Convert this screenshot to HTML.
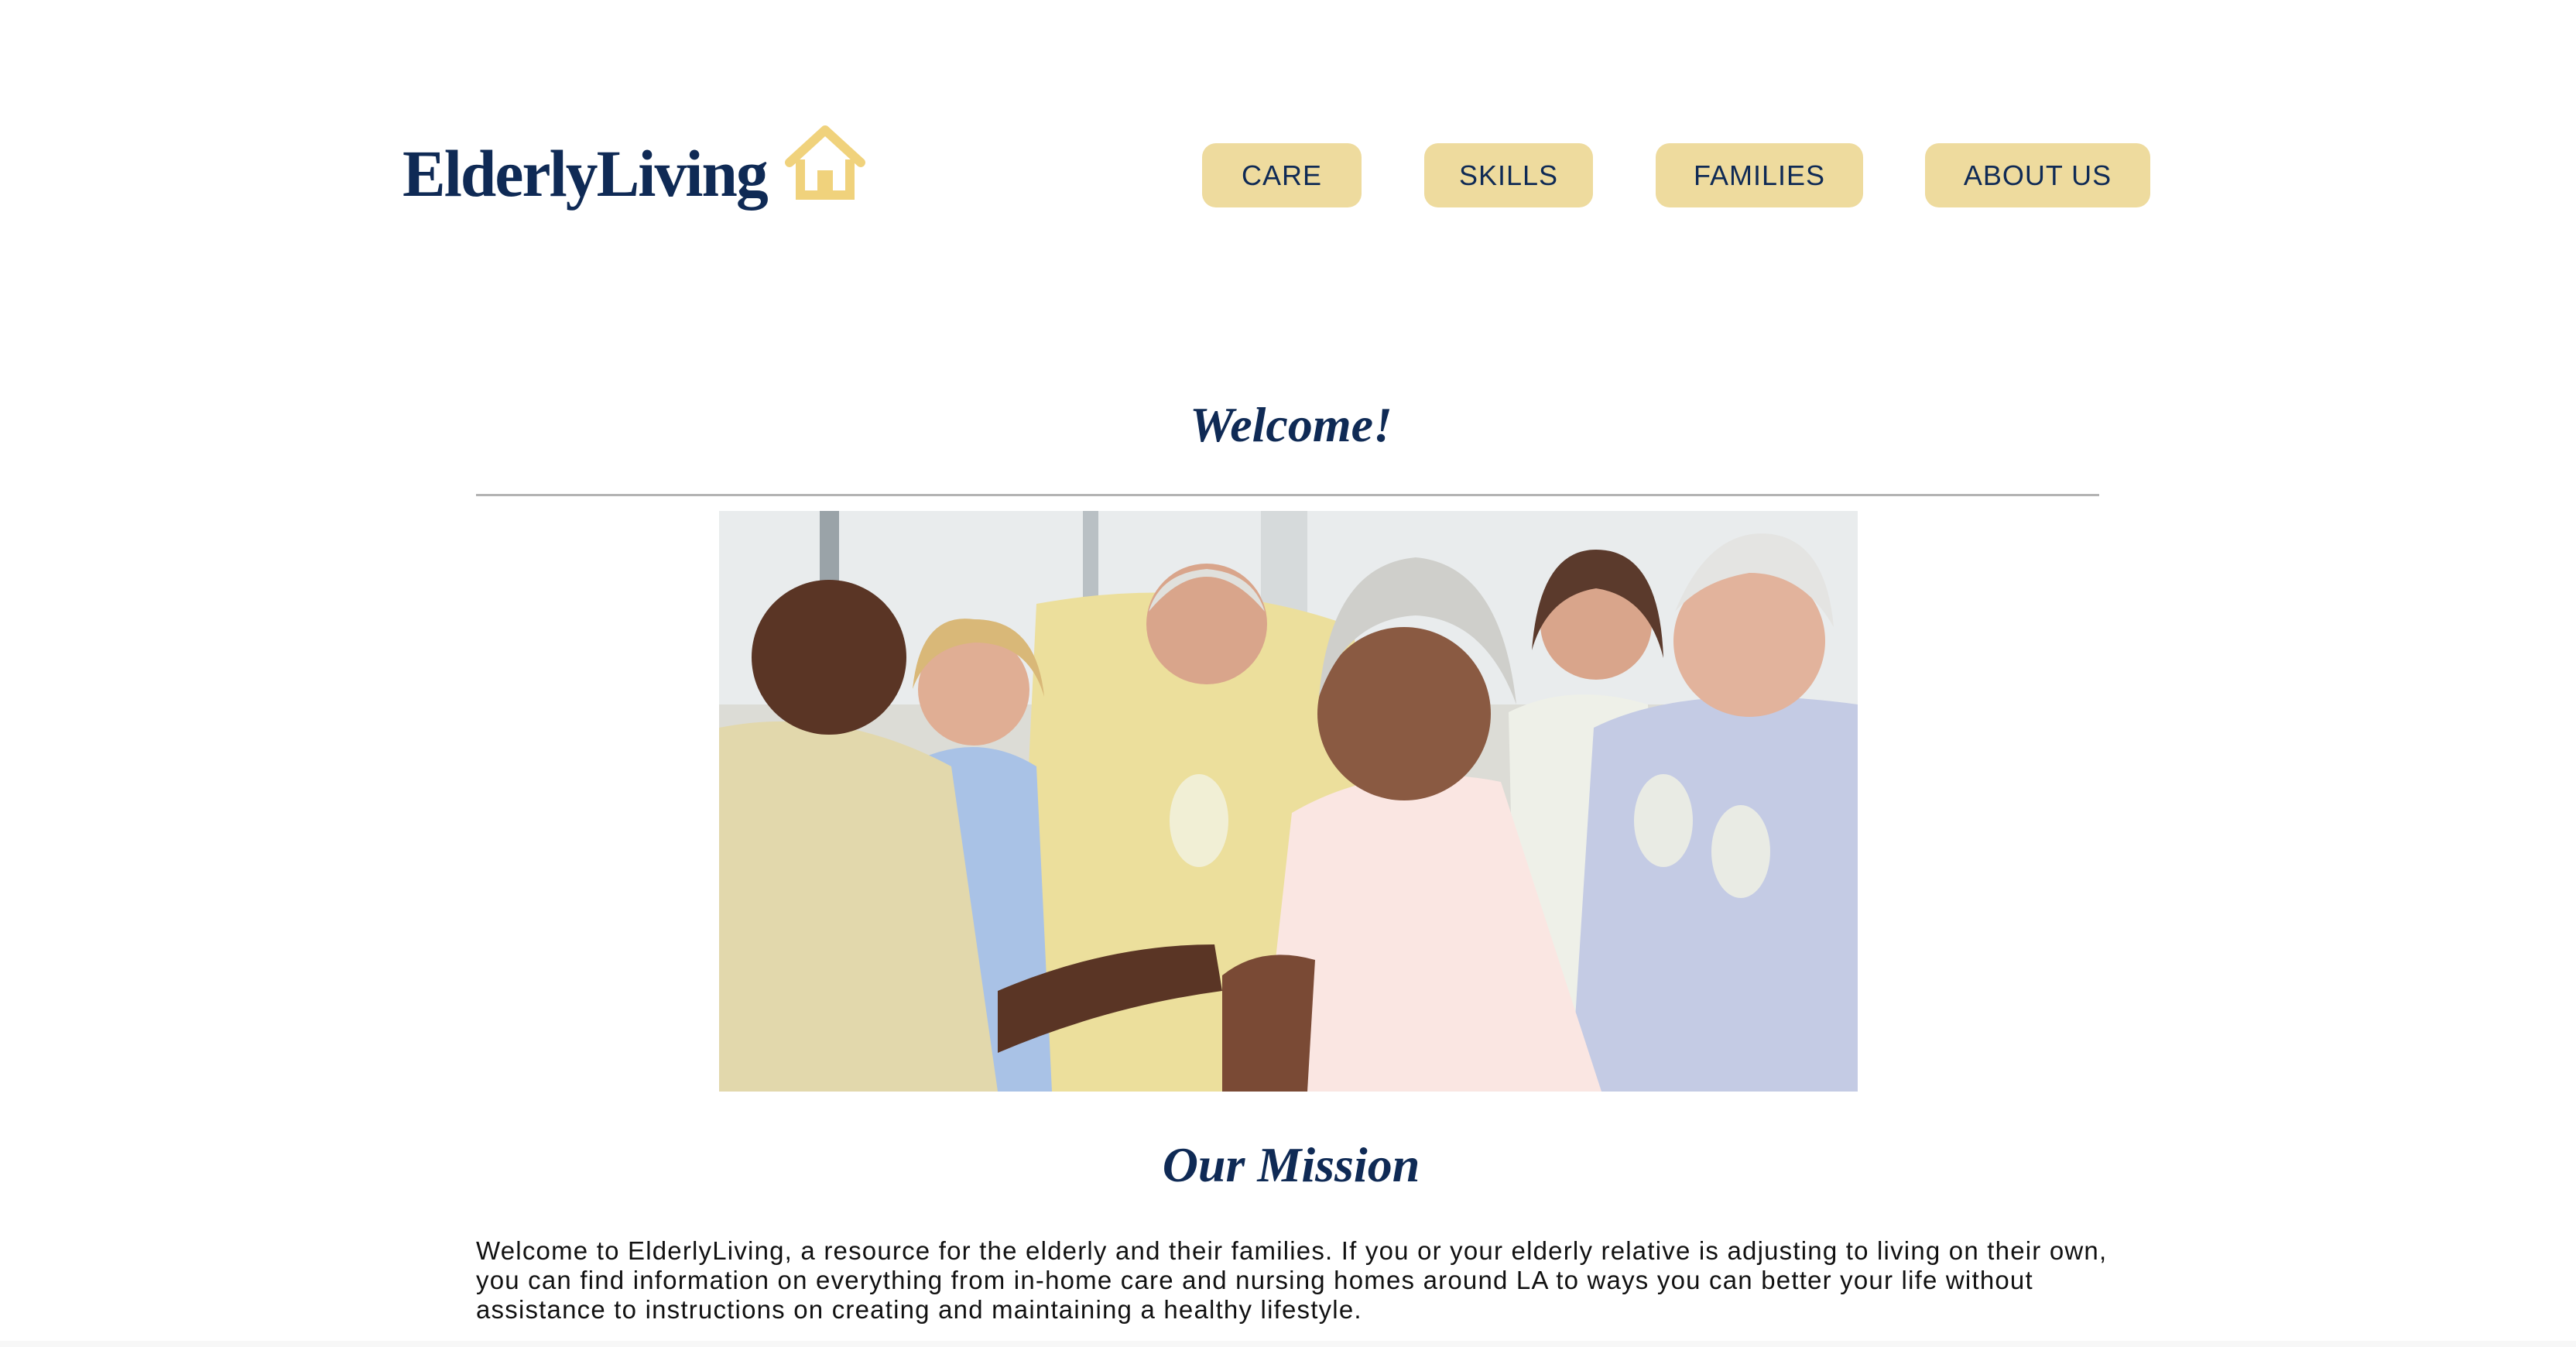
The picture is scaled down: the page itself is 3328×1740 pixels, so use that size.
<!DOCTYPE html>
<html><head><meta charset="utf-8"><style>
html,body{margin:0;padding:0;background:#fff;width:3328px;height:1740px;overflow:hidden;position:relative;font-family:"Liberation Sans",sans-serif}
.logo{position:absolute;left:520px;top:164px;font-family:"Liberation Serif",serif;font-weight:bold;font-size:86px;color:#0f2a55;letter-spacing:-2px;line-height:120px;transform:scaleX(0.97);transform-origin:left}
.btn{position:absolute;top:185px;height:83px;background:#eedb9e;border-radius:18px;color:#0f2a55;font-size:36px;line-height:83px;text-align:center;letter-spacing:1px}
h2{position:absolute;left:0;width:3336px;margin:0;text-align:center;font-family:"Liberation Serif",serif;font-style:italic;font-weight:bold;font-size:64px;color:#0f2a55}
.hr{position:absolute;left:615px;top:638px;width:2097px;height:3px;background:#b3b3b3}
p{position:absolute;left:615px;top:1597px;width:2150px;margin:0;font-size:33px;line-height:38px;color:#111;letter-spacing:1.2px}
.foot{position:absolute;left:0;top:1732px;width:3328px;height:8px;background:#f7f7f7}
</style></head><body>
<div class="logo">ElderlyLiving</div>
<svg style="position:absolute;left:1012px;top:160px" width="108" height="98" viewBox="0 0 108 98">
<path d="M8 50 L54 8 L100 50" fill="none" stroke="#f0d27c" stroke-width="12" stroke-linejoin="round" stroke-linecap="round"/>
<path d="M22 46 V92 H86 V46" fill="none" stroke="#f0d27c" stroke-width="12"/>
<rect x="44" y="60" width="20" height="32" fill="#f0d27c"/>
</svg>
<div class="btn" style="left:1553px;width:206px">CARE</div>
<div class="btn" style="left:1840px;width:218px">SKILLS</div>
<div class="btn" style="left:2139px;width:268px">FAMILIES</div>
<div class="btn" style="left:2487px;width:291px">ABOUT US</div>
<h2 style="top:512px">Welcome!</h2>
<div class="hr"></div>
<svg style="position:absolute;left:929px;top:660px" width="1471" height="750" viewBox="0 0 1471 750">
<rect width="1471" height="750" fill="#e9eced"/>
<rect x="130" y="0" width="25" height="300" fill="#9aa3a8"/>
<rect x="470" y="0" width="20" height="260" fill="#b9c0c4"/>
<rect x="700" y="0" width="60" height="300" fill="#d6dadb"/>
<rect x="0" y="250" width="1471" height="500" fill="#dcdcd6"/>
<path d="M400 750 L420 560 L800 540 L800 750Z" fill="#f5f5f3"/>
<path d="M410 120 Q630 80 820 150 L860 750 L380 750Z" fill="#ecdf9c"/>
<circle cx="630" cy="146" r="78" fill="#d9a58b"/><path d="M555 130 Q630 40 705 130 Q690 80 630 75 Q570 80 555 130Z" fill="#e0e0dc"/>
<path d="M240 330 Q330 280 410 330 L430 750 L230 750Z" fill="#a9c2e6"/>
<circle cx="329" cy="231" r="72" fill="#e0ae94"/><path d="M250 230 Q260 130 330 140 Q410 140 420 240 Q400 170 330 170 Q270 175 250 230Z" fill="#d9b878"/>
<path d="M0 280 Q150 250 300 330 L360 750 L0 750Z" fill="#e2d8ac"/>
<circle cx="142" cy="189" r="100" fill="#5a3525"/>
<path d="M360 620 Q500 560 640 560 L650 620 Q500 640 360 700Z" fill="#5a3525"/>
<path d="M1020 260 Q1100 220 1200 250 L1220 700 L1030 700Z" fill="#eef0e8"/>
<circle cx="1133" cy="146" r="72" fill="#d9a58b"/><path d="M1050 180 Q1060 50 1133 50 Q1215 50 1220 190 Q1200 110 1133 100 Q1070 110 1050 180Z" fill="#5b3a2c"/>
<path d="M1130 280 Q1250 220 1471 250 L1471 750 L1100 750Z" fill="#c4cbe4"/>
<circle cx="1331" cy="168" r="98" fill="#e2b39c"/><path d="M1235 130 Q1280 20 1360 30 Q1430 40 1440 150 Q1400 80 1331 80 Q1270 90 1235 130Z" fill="#e4e4e2"/>
<path d="M740 390 Q860 320 1010 350 L1140 750 L700 750Z" fill="#fae6e2"/>
<path d="M650 600 Q700 560 770 580 L760 750 L650 750Z" fill="#7a4a35"/>
<circle cx="885" cy="262" r="112" fill="#8a5a42"/><path d="M775 240 Q790 70 900 60 Q1010 70 1030 250 Q990 140 900 135 Q810 140 775 240Z" fill="#cfcfcb"/>
<ellipse cx="620" cy="400" rx="38" ry="60" fill="#f2f2e4" opacity=".8"/>
<ellipse cx="1220" cy="400" rx="38" ry="60" fill="#f2f2e4" opacity=".8"/>
<ellipse cx="1320" cy="440" rx="38" ry="60" fill="#f2f2e4" opacity=".8"/>
</svg>
<h2 style="top:1468px">Our Mission</h2>
<p>Welcome to ElderlyLiving, a resource for the elderly and their families. If you or your elderly relative is adjusting to living on their own, you can find information on everything from in-home care and nursing homes around LA to ways you can better your life without assistance to instructions on creating and maintaining a healthy lifestyle.</p>
<div class="foot"></div>
</body></html>
